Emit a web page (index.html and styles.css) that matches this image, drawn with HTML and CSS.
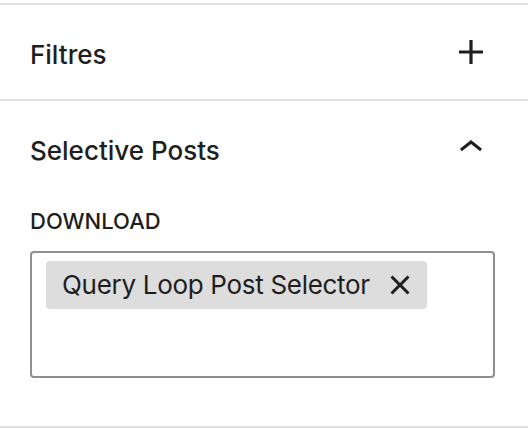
FILE: index.html
```html
<!DOCTYPE html>
<html lang="fr">
<head>
<meta charset="utf-8">
<title>Selective Posts</title>
<link rel="stylesheet" href="styles.css">
</head>
<body>
<div class="sidebar">
  <section class="panel">
    <h2 class="panel-title">
      <button class="panel-toggle" type="button" aria-expanded="false">
        <span class="panel-label">Filtres</span>
        <svg class="panel-icon" viewBox="0 0 24 24" width="48" height="48" aria-hidden="true"><path d="M18 11.2h-5.2V6h-1.6v5.2H6v1.6h5.2V18h1.6v-5.2H18z"/></svg>
      </button>
    </h2>
  </section>
  <section class="panel is-open">
    <h2 class="panel-title">
      <button class="panel-toggle" type="button" aria-expanded="true">
        <span class="panel-label">Selective Posts</span>
        <svg class="panel-icon" viewBox="0 0 24 24" width="48" height="48" aria-hidden="true"><path d="M6.5 12.4L12 8l5.5 4.4-.9 1.2L12 10l-4.6 3.6-.9-1.2z"/></svg>
      </button>
    </h2>
    <div class="panel-body">
      <label class="field-label">DOWNLOAD</label>
      <div class="token-field">
        <span class="token">
          <span class="token-text">Query Loop Post Selector</span>
          <svg class="token-remove" viewBox="0 0 24 24" width="48" height="48" aria-hidden="true"><path d="M12 13.06l3.712 3.713 1.061-1.06L13.061 12l3.713-3.712-1.06-1.06L12 10.938 8.288 7.227l-1.061 1.06L10.939 12l-3.712 3.712 1.06 1.061L12 13.061z"/></svg>
        </span>
        <div class="token-input"></div>
      </div>
    </div>
  </section>
</div>
</body>
</html>
```

FILE: styles.css
```css
* { box-sizing: border-box; }

html, body {
  margin: 0;
  padding: 0;
  background: #ffffff;
}

body {
  font-family: Inter, "Noto Sans", "Liberation Sans", sans-serif;
  color: #1e1e1e;
  -webkit-font-smoothing: antialiased;
}

.sidebar {
  width: 528px;
  padding-top: 3px;
}

.panel {
  border-top: 2px solid #e0e0e0;
}

.panel.is-open {
  border-bottom: 2px solid #e0e0e0;
}

.panel-title {
  margin: 0;
  font-size: inherit;
}

.panel-toggle {
  display: flex;
  align-items: center;
  justify-content: space-between;
  width: 100%;
  height: 94px;
  padding: 0 33px 0 30px;
  border: 0;
  background: transparent;
  font-family: inherit;
  font-size: 26px;
  font-weight: 500;
  line-height: 32px;
  color: #1e1e1e;
  text-align: left;
  cursor: pointer;
}

.panel-label {
  padding-top: 5px;
}

.panel-icon {
  display: block;
  fill: #1e1e1e;
  flex: none;
}

.panel-body {
  padding: 10px 33px 48px 30px;
}

.field-label {
  display: block;
  font-size: 22px;
  font-weight: 500;
  line-height: 32px;
  margin-bottom: 14px;
}

.token-field {
  display: flex;
  flex-direction: column;
  align-items: flex-start;
  height: 127px;
  padding: 8px 14px;
  border: 2px solid #8f8f8f;
  border-radius: 4px;
}

.token {
  display: inline-flex;
  align-items: center;
  height: 48px;
  padding: 0 3px 0 16px;
  background: #dddddd;
  border-radius: 4px;
  font-size: 26px;
  line-height: 32px;
  letter-spacing: -0.3px;
  color: #1e1e1e;
}

.token-text {
  margin-right: 6px;
}

.token-remove {
  display: block;
  fill: #1e1e1e;
  flex: none;
}

.token-input {
  height: 48px;
}
```
